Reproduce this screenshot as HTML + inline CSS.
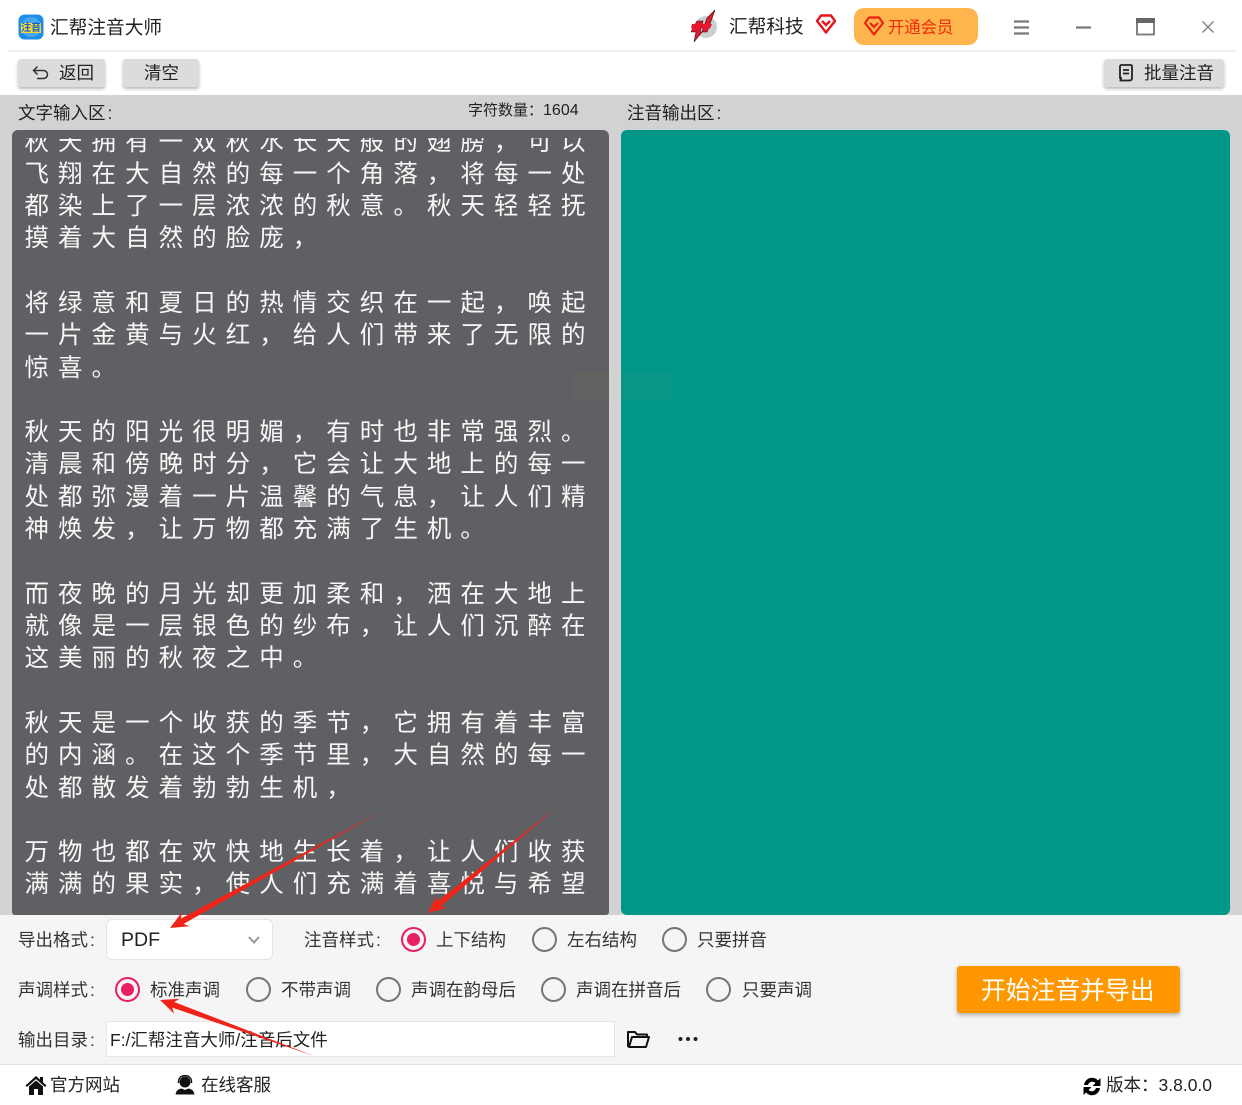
<!DOCTYPE html>
<html lang="zh"><head><meta charset="utf-8"><style>
html,body{margin:0;padding:0;background:#fff}
#p{position:relative;width:1242px;height:1105px;overflow:hidden;background:#fff;font-family:"Liberation Sans","Noto Sans CJK SC",sans-serif;color:#333}
.a{position:absolute}
.t{position:absolute;white-space:nowrap;line-height:24px;font-size:17.5px;height:24px}
.btn{position:absolute;background:#dcdcdc;border-radius:3px;box-shadow:0 2px 3px rgba(0,0,0,.28)}
.r{position:absolute;width:21px;height:21px;border:2.5px solid #757575;border-radius:50%;box-sizing:content-box}
.r.on{border-color:#e91e63}
.r.on:after{content:"";position:absolute;left:4px;top:4px;width:13px;height:13px;border-radius:50%;background:#e91e63}
#txt{position:absolute;left:12px;top:138px;width:597px;height:762px;overflow:hidden}
#txt div{position:absolute;left:12.5px;white-space:nowrap;font-size:24.5px;letter-spacing:9.03px;line-height:32px;height:32px;color:#f7f7f7;font-family:"Liberation Sans","Noto Sans CJK SC",sans-serif;font-weight:400}
i{font-style:normal;display:inline-block}
</style></head><body><div id="p">
<div class="a" style="left:0;top:95px;width:1242px;height:820px;background:#d2d2d2"></div>
<div class="a" style="left:8px;top:50px;width:1228px;height:2px;background:#eeeeee"></div>

<svg class="a" style="left:18px;top:14px" width="26" height="26" viewBox="0 0 26 26"><rect x="0.5" y="0.5" width="25" height="25" rx="6" fill="#1f8eea"/><circle cx="13" cy="13" r="10" fill="#47a6ee"/><rect x="3" y="9" width="20" height="10" fill="#f7d63a"/></svg>
<div class="t" style="left:21px;top:17px;font-size:10px;font-weight:700;color:#1466c8;line-height:24px">注音</div>
<div class="t" style="left:50px;top:16px;font-size:18.7px;color:#222">汇帮注音大师</div>

<svg class="a" style="left:688px;top:9px" width="32" height="34" viewBox="0 0 32 34"><circle cx="18" cy="18" r="11" fill="#c9cfd0"/><path d="M27 1L19 23L14 23L19 9Z" fill="#e5172f" stroke="#3a0a14" stroke-width=".6"/><path d="M9 12L15 12L12 23L14 23L6 33L8 23L3 23Z" fill="#e5172f" stroke="#3a0a14" stroke-width=".6"/><path d="M4 15H24L22 19.500H3Z" fill="#e5172f"/></svg>
<div class="t" style="left:729px;top:15px;font-size:18.7px;color:#222">汇帮科技</div>
<svg class="a" style="left:815px;top:13px" width="22" height="22" viewBox="0 0 22 22"><path d="M6 2.500H16L20 8L11 19.500L2 8Z" fill="none" stroke="#e8141c" stroke-width="2.400" stroke-linejoin="round"/><path d="M7 8L11 12L15 8" fill="none" stroke="#e8141c" stroke-width="2.400"/></svg>
<div class="a" style="left:854px;top:8px;width:124px;height:37px;background:#ffb54d;border-radius:10px"></div>
<svg class="a" style="left:863px;top:15px" width="22" height="22" viewBox="0 0 22 22"><path d="M6 2.500H16L20 8L11 19.500L2 8Z" fill="none" stroke="#e8240c" stroke-width="2.200" stroke-linejoin="round"/><path d="M7 8L11 12L15 8" fill="none" stroke="#e8240c" stroke-width="2.200"/></svg>
<div class="t" style="left:888px;top:16px;font-size:16.3px;color:#f02a08">开通会员</div>

<svg class="a" style="left:1010px;top:14px" width="220" height="28" viewBox="0 0 220 28"><path d="M4 7.500H19M4 13.500H19M4 19.500H19" stroke="#777" stroke-width="2.200"/><path d="M66 13.500H81" stroke="#777" stroke-width="2.200"/><rect x="127" y="5" width="17" height="15.500" fill="none" stroke="#777" stroke-width="1.800"/><rect x="126" y="4" width="19" height="5" fill="#666"/><path d="M192.500 7.500L203.500 18.500M203.500 7.500L192.500 18.500" stroke="#888" stroke-width="1.500"/></svg>

<div class="btn" style="left:18px;top:59px;width:87px;height:28px"></div>
<svg class="a" style="left:31px;top:63px" width="20" height="20" viewBox="0 0 20 20"><path d="M6.500 3.500L2.500 7.500L6.500 11.500M2.500 7.500H12.500A4 4 0 0 1 12.500 15.500H6" fill="none" stroke="#333" stroke-width="1.500"/></svg>
<div class="t" style="left:59px;top:61px;font-size:17.5px;color:#222">返回</div>
<div class="btn" style="left:123px;top:59px;width:76px;height:28px"></div>
<div class="t" style="left:144px;top:61px;font-size:17.5px;color:#222">清空</div>
<div class="btn" style="left:1104px;top:59px;width:120px;height:28px"></div>
<svg class="a" style="left:1117px;top:63px" width="18" height="20" viewBox="0 0 18 20"><path d="M3 15V3.500Q3 2 4.500 2H13.500Q15 2 15 3.500V15Q15 17.500 12.500 17.500H2.500Q4 17.500 4 15ZM6 7H12M6 10.500H12" fill="none" stroke="#222" stroke-width="1.800"/></svg>
<div class="t" style="left:1144px;top:61px;font-size:17.5px;color:#222">批量注音</div>

<div class="t" style="left:18px;top:101px;font-size:17.5px;color:#222">文字输入区<i style="margin-left:2px">:</i></div>
<div class="t" style="left:468px;top:99px;font-size:15px;color:#222">字符数量：<span style="font-size:16px">1604</span></div>
<div class="t" style="left:627px;top:101px;font-size:17.5px;color:#222">注音输出区<i style="margin-left:2px">:</i></div>

<div class="a" style="left:12px;top:130px;width:597px;height:785px;background:#5f6063;border-radius:6px 6px 3px 3px"></div>
<div class="a" style="left:621px;top:130px;width:609px;height:785px;background:#009688;border-radius:6px"></div>
<div class="a" style="left:572px;top:372px;width:37px;height:29px;background:#616360"></div>
<div class="a" style="left:621px;top:372px;width:50px;height:29px;background:#089786"></div>

<div id="txt">
<div style="top:-11px">秋天拥有一双秋水长天般的翅膀，可以</div>
<div style="top:21px">飞翔在大自然的每一个角落，将每一处</div>
<div style="top:53px">都染上了一层浓浓的秋意。秋天轻轻抚</div>
<div style="top:85px">摸着大自然的脸庞，</div>
<div style="top:150px">将绿意和夏日的热情交织在一起，唤起</div>
<div style="top:182px">一片金黄与火红，给人们带来了无限的</div>
<div style="top:215px">惊喜。</div>
<div style="top:279px">秋天的阳光很明媚，有时也非常强烈。</div>
<div style="top:311px">清晨和傍晚时分，它会让大地上的每一</div>
<div style="top:344px">处都弥漫着一片温馨的气息，让人们精</div>
<div style="top:376px">神焕发，让万物都充满了生机。</div>
<div style="top:441px">而夜晚的月光却更加柔和，洒在大地上</div>
<div style="top:473px">就像是一层银色的纱布，让人们沉醉在</div>
<div style="top:505px">这美丽的秋夜之中。</div>
<div style="top:570px">秋天是一个收获的季节，它拥有着丰富</div>
<div style="top:602px">的内涵。在这个季节里，大自然的每一</div>
<div style="top:635px">处都散发着勃勃生机，</div>
<div style="top:699px">万物也都在欢快地生长着，让人们收获</div>
<div style="top:731px">满满的果实，使人们充满着喜悦与希望</div>
</div>

<div class="a" style="left:0;top:915px;width:1242px;height:149px;background:#f5f5f5"></div>
<div class="a" style="left:0;top:1064px;width:1242px;height:1px;background:#e2e2e2"></div>

<div class="t" style="left:18px;top:928px">导出格式<i style="margin-left:2px">:</i></div>
<div class="a" style="left:106px;top:919px;width:167px;height:41px;box-sizing:border-box;background:#fff;border:1px solid #e4e4e4;border-radius:6px"></div>
<div class="t" style="left:121px;top:928px;font-size:19.500px;color:#222">PDF</div>
<svg class="a" style="left:247px;top:934px" width="14" height="12" viewBox="0 0 14 12"><path d="M2 3L7 8.500L12 3" fill="none" stroke="#999" stroke-width="2"/></svg>
<div class="t" style="left:304px;top:928px">注音样式<i style="margin-left:2px">:</i></div>
<div class="r on" style="left:401px;top:927px"></div><div class="t" style="left:436px;top:928px">上下结构</div>
<div class="r" style="left:532px;top:927px"></div><div class="t" style="left:567px;top:928px">左右结构</div>
<div class="r" style="left:662px;top:927px"></div><div class="t" style="left:697px;top:928px">只要拼音</div>

<div class="t" style="left:18px;top:978px">声调样式<i style="margin-left:2px">:</i></div>
<div class="r on" style="left:115px;top:977px"></div><div class="t" style="left:150px;top:978px">标准声调</div>
<div class="r" style="left:246px;top:977px"></div><div class="t" style="left:281px;top:978px">不带声调</div>
<div class="r" style="left:376px;top:977px"></div><div class="t" style="left:411px;top:978px">声调在韵母后</div>
<div class="r" style="left:541px;top:977px"></div><div class="t" style="left:576px;top:978px">声调在拼音后</div>
<div class="r" style="left:706px;top:977px"></div><div class="t" style="left:742px;top:978px">只要声调</div>

<div class="a" style="left:957px;top:966px;width:223px;height:47px;background:#ff9800;border-radius:3px;box-shadow:0 2px 4px rgba(0,0,0,.3)"></div>
<div class="t" style="left:981px;top:977px;font-size:24.800px;line-height:30px;height:30px;color:#fff">开始注音并导出</div>

<div class="t" style="left:18px;top:1028px">输出目录<i style="margin-left:2px">:</i></div>
<div class="a" style="left:106px;top:1021px;width:509px;height:36px;box-sizing:border-box;background:#fff;border:1.500px solid #e6e6e6"></div>
<div class="t" style="left:110px;top:1028px;font-size:17.500px;color:#222">F:/汇帮注音大师/注音后文件</div>
<svg class="a" style="left:626px;top:1029px" width="26" height="20" viewBox="0 0 26 20"><path d="M2 18V3H9L11 5.500H21V8M3 18H20L23 8H6L3 18Z" fill="none" stroke="#111" stroke-width="2" stroke-linejoin="round"/></svg>
<svg class="a" style="left:676px;top:1034px" width="24" height="10" viewBox="0 0 24 10"><circle cx="4.500" cy="5" r="2" fill="#222"/><circle cx="12" cy="5" r="2" fill="#222"/><circle cx="19.500" cy="5" r="2" fill="#222"/></svg>

<svg class="a" style="left:25px;top:1075px" width="22" height="20" viewBox="0 0 22 20"><path d="M11 1L0.500 10.500L2 12L11 4L20 12L21.500 10.500L18 7.300V2H15V4.600Z" fill="#111"/><path d="M4 11.500L11 5.500L18 11.500V20H13V14H9V20H4Z" fill="#111"/></svg>
<div class="t" style="left:50px;top:1073px;color:#222">官方网站</div>
<svg class="a" style="left:175px;top:1075px" width="20" height="20" viewBox="0 0 20 20"><circle cx="10" cy="7" r="5.500" fill="#111"/><path d="M3.500 8V6.500A6.500 6 0 0 1 16.500 6.500V8" fill="none" stroke="#111" stroke-width="1.400"/><path d="M0.500 19.500Q1.500 14 6.500 13.500L10 15L13.500 13.500Q18.500 14 19.500 19.500Z" fill="#111"/></svg>
<div class="t" style="left:201px;top:1073px;color:#222">在线客服</div>
<svg class="a" style="left:1082px;top:1076px" width="20" height="21" viewBox="0 0 20 20"><path d="M2 8.500A8 8 0 0 1 16 4L18.500 1.500V9.500H10.500L13.500 6.500A4.500 4.500 0 0 0 6 8.500Z" fill="#000"/><path d="M18 11.500A8 8 0 0 1 4 16L1.500 18.500V10.500H9.500L6.500 13.500A4.500 4.500 0 0 0 14 11.500Z" fill="#000"/></svg>
<div class="t" style="left:1106px;top:1073px;color:#222">版本：3.8.0.0</div>

<svg class="a" style="left:0;top:0" width="1242" height="1105" viewBox="0 0 1242 1105">
<path d="M382 811L183.700 923.900L189.600 926.300L170 928L181.900 912.300L180.800 918.600Z" fill="#f02318"/>
<path d="M557 807L440.700 906.400L447 907.800L428 913L436.800 895.400L436.900 901.800Z" fill="#f02318"/>
<path d="M314 1056L172.200 1007.600L174.200 1013.700L160 1000L179.600 998.700L174.200 1002Z" fill="#f02318"/>
</svg>
</div></body></html>
